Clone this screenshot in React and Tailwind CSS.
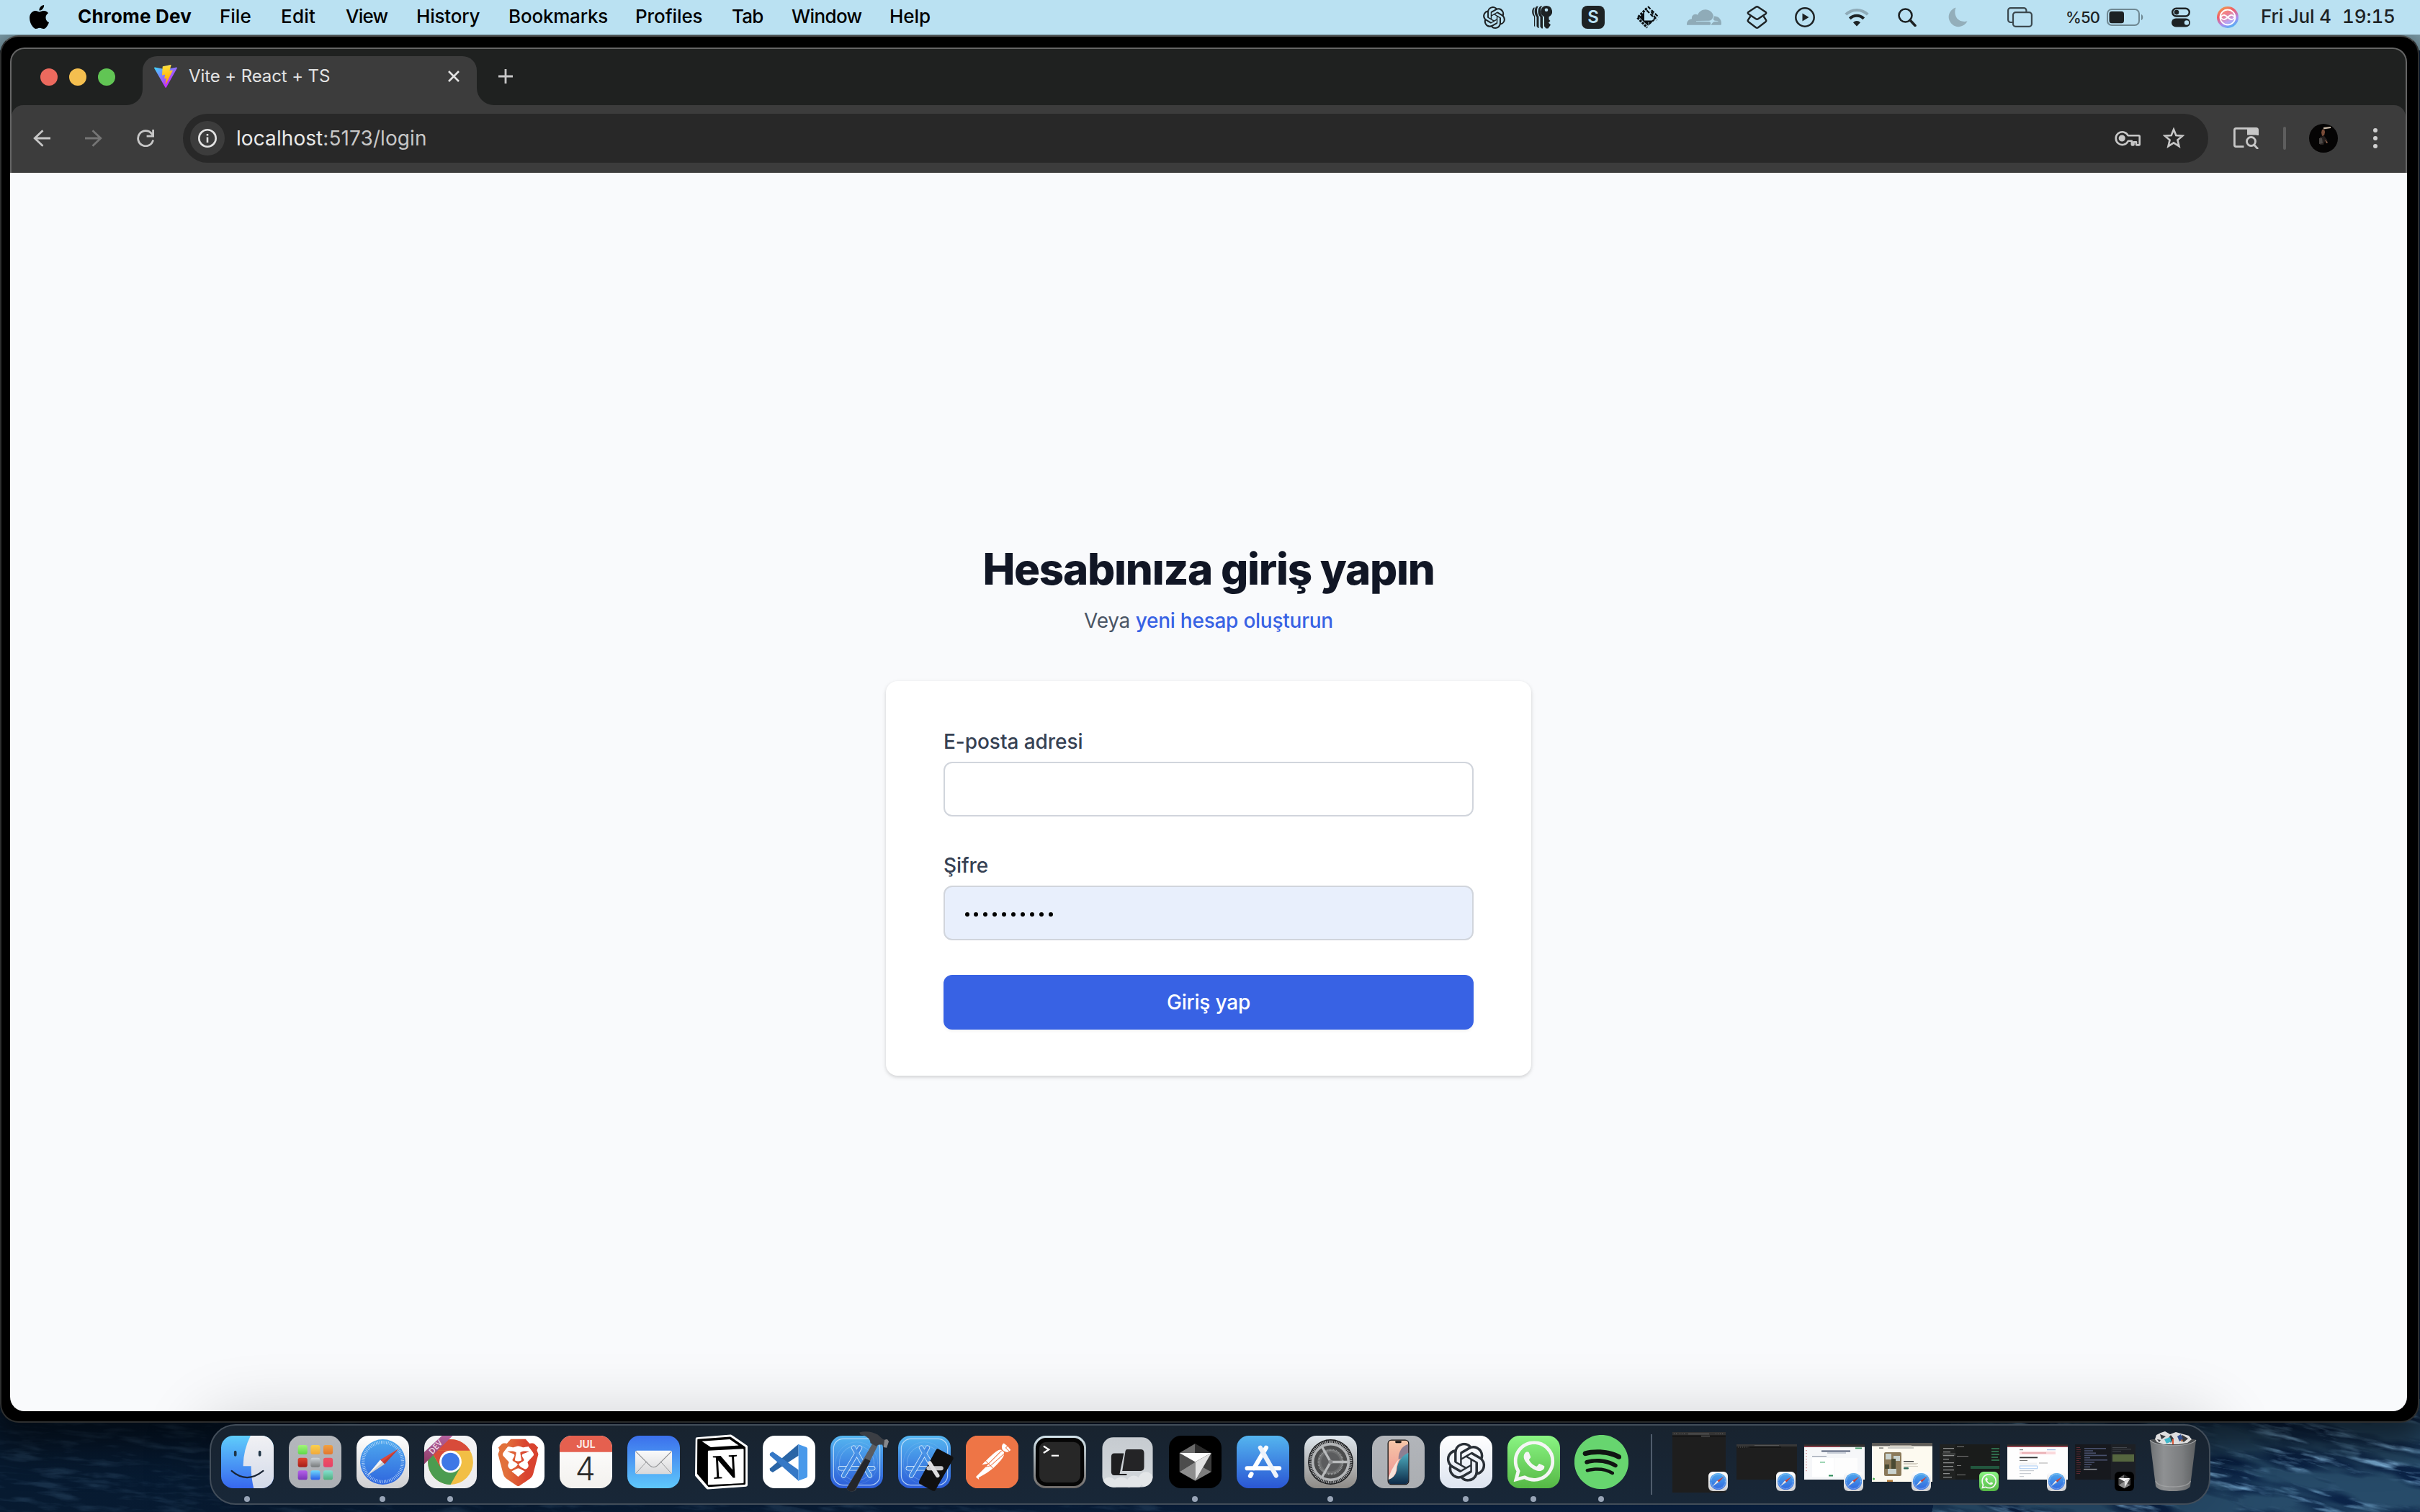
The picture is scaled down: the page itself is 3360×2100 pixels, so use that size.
import React from "react";
import { SiApple, SiBrave, SiCloudflare, SiOpenai, SiPostman, SiSpotify, SiWhatsapp } from "react-icons/si";

/* ---------- wallpaper ---------- */

function Wallpaper() {
  return (
    <svg className="absolute inset-0 h-full w-full" viewBox="0 0 3360 2100" preserveAspectRatio="none">
      <defs>
        <filter id="waves" x="0" y="0" width="100%" height="100%">
          <feTurbulence type="fractalNoise" baseFrequency="0.018 0.11" numOctaves="4" seed="7" />
          <feColorMatrix values="0 0 0 0 0.22  0 0 0 0 0.46  0 0 0 0 0.72  2.6 2.2 0 0 -2.35" />
        </filter>
        <filter id="troughs" x="0" y="0" width="100%" height="100%">
          <feTurbulence type="fractalNoise" baseFrequency="0.008 0.035" numOctaves="3" seed="3" />
          <feColorMatrix values="0 0 0 0 0.02  0 0 0 0 0.07  0 0 0 0 0.14  3 0 2 0 -1.9" />
        </filter>
        <linearGradient id="sea" x1="0" x2="1">
          <stop offset="0" stopColor="#071a30" />
          <stop offset="1" stopColor="#0b2448" />
        </linearGradient>
      </defs>
      <rect width="3360" height="2100" fill="url(#sea)" />
      <rect width="3360" height="70" fill="#8fb4c2" />
      <g transform="rotate(12 2900 2040)">
        <rect x="2700" y="1850" width="760" height="340" filter="url(#waves)" />
        <rect x="2700" y="1850" width="760" height="340" filter="url(#troughs)" />
      </g>
      <g transform="rotate(4 150 2040)" opacity="0.14">
        <rect x="-60" y="1940" width="1700" height="330" filter="url(#waves)" />
      </g>
    </svg>
  );
}

/* ---------- menu bar ---------- */

const menus = [
  ["Chrome Dev", "w-[197px] font-bold tracking-[0.2px]"],
  ["File", "w-[85px]"],
  ["Edit", "w-[90px] tracking-[0.2px]"],
  ["View", "w-[98px] tracking-[-0.8px]"],
  ["History", "w-[128px] tracking-[-0.2px]"],
  ["Bookmarks", "w-[176px] tracking-[-0.2px]"],
  ["Profiles", "w-[134px] tracking-[-0.1px]"],
  ["Tab", "w-[83px] tracking-[-0.8px]"],
  ["Window", "w-[136px] tracking-[-0.6px]"],
  ["Help", "tracking-[-0.1px]"],
];

function KeysIcon() {
  return (
    <svg className="ml-[37px] h-8 w-7" viewBox="0 0 28 32" fill="#1d2224">
      <path fillRule="evenodd" d="M20 0a8 8 0 0 1 3.500 15.200V19l2 2-2.500 2.500 3 3-3.500 5h-3l-2.500-3V15.300A8 8 0 0 1 20 0Zm0 3.500a2.300 2.300 0 1 0 0 4.600 2.300 2.300 0 0 0 0-4.600Z" />
      <path d="M12 .5C7.500 3 7.500 12.500 11.500 15.500V29l2 2.500h1.500V15c-3.500-3-4.500-11-.5-14.500zM6.500.8C2.500 3.500 3 12.500 6.500 15.500V28.500l2 2.500h1V15C6.500 11.500 6 4 9 .8zM2.500 2.500C-.8 5.500-.5 12 3 15v13l1.200 1.500V14.500C2 11 1.800 6 4 2.800z" />
    </svg>
  );
}

function DiamondIcon() {
  return (
    <svg className="ml-11 h-8 w-8" viewBox="0 0 32 32" fill="none" stroke="#0a0f12">
      <path d="M14.500 3.500L1.500 16.500L15 30.500" strokeWidth="3.200" strokeDasharray="3.200 1.400" />
      <path d="M11 8.500L4 16L11 23zM11 20.500H24L19 25L16.500 22.500V28L11 23z" fill="#0a0f12" stroke="none" />
      <path d="M16 1l15 15M14.500 6.500l12 12M20.500 8l8 12M17 26l8-7" strokeWidth="2.200" strokeDasharray="5 2" />
    </svg>
  );
}

function LayersIcon() {
  return (
    <svg className="ml-[35px] h-8 w-[29px]" viewBox="0 0 29 32" fill="none" stroke="#1d2224" strokeWidth="2.400" strokeLinejoin="round">
      <path d="M13 1.800q1.500-1 3 0l10.500 7q1.500 1.200 0 2.400l-10.500 7q-1.500 1-3 0l-10.500-7q-1.500-1.200 0-2.400z" />
      <path d="M5.500 14.500L2.500 19q-1.500 1.800 0 3.200l10.500 8q1.500 1 3 0l10.500-8q1.500-1.400 0-3.200l-3-4.500" />
    </svg>
  );
}

function WifiIcon() {
  return (
    <svg className="ml-[41px] h-[26px] w-[34px]" viewBox="0 0 34 26" fill="none" strokeWidth="4">
      <path d="M1.800 9.200a21.500 21.500 0 0 1 30.400 0" stroke="#8fabb8" />
      <path d="M7.300 14.800a13.800 13.800 0 0 1 19.400 0" stroke="#1d2224" />
      <path d="M17 25.500l-5-5.300a7 7 0 0 1 10 0z" fill="#1d2224" />
    </svg>
  );
}

function SiriIcon() {
  return (
    <svg className="ml-[37px] h-[30px] w-[30px]" viewBox="0 0 30 30">
      <defs>
        <linearGradient id="siri" x1="0.200" y1="0" x2="0.700" y2="1">
          <stop offset="0" stopColor="#f0a04b" />
          <stop offset="0.350" stopColor="#ef5b6b" />
          <stop offset="0.700" stopColor="#a98bf0" />
          <stop offset="1" stopColor="#45b5f5" />
        </linearGradient>
      </defs>
      <circle cx="15" cy="15" r="15" fill="url(#siri)" />
      <circle cx="15" cy="15" r="10.500" fill="#ffffff33" stroke="#fff" strokeWidth="1.800" />
      <path d="M5 15c4-5 7-3 10 0s6 5 10 0c-4-5-7-3-10 0s-6 5-10 0z" fill="none" stroke="#fff" strokeWidth="1.800" />
    </svg>
  );
}

function MenuBar() {
  return (
    <header className="relative z-10 flex h-12 shrink-0 items-center justify-between bg-[#bae1f2] text-[26px] leading-none font-[450] text-black">
      <div className="flex items-center pb-0.5">
        <SiApple className="mr-[37px] ml-[38px] size-[33px]" />
        {menus.map(([label, cls]) => (
          <span key={label} className={cls}>{label}</span>
        ))}
      </div>
      <div className="flex w-[1301px] items-center text-[#1d2224]">
        <SiOpenai className="size-[31px]" />
        <KeysIcon />
        <span className="ml-[41px] flex h-8 w-8 items-center justify-center rounded-[8px] bg-[#1d2224] text-[24px] font-semibold text-[#bae1f2]">S</span>
        <DiamondIcon />
        <SiCloudflare className="ml-[38px] size-12 text-[#8fabb8]" />
        <LayersIcon />
        <svg className="ml-[38px] size-7" viewBox="0 0 28 28">
          <circle cx="14" cy="14" r="12.700" fill="none" stroke="#1d2224" strokeWidth="2.500" />
          <path d="M10.500 8.500v11l9-5.500z" fill="#1d2224" />
        </svg>
        <WifiIcon />
        <svg className="ml-10 h-[26px] w-[26px]" viewBox="0 0 26 26" fill="none" stroke="#1d2224">
          <circle cx="10.500" cy="10.500" r="9" strokeWidth="2.600" />
          <path d="M17 17l7 7.500" strokeWidth="3.600" strokeLinecap="round" />
        </svg>
        <svg className="ml-11 h-7 w-[27px]" viewBox="0 0 27 28">
          <path d="M10.500.5C7 9 11 22.500 26.500 19.500A13.600 13.600 0 1 1 10.500.5z" fill="#93aeba" />
        </svg>
        <svg className="ml-[55px] h-7 w-[35px]" viewBox="0 0 35 28" fill="none" stroke="#3c494f" strokeWidth="2.200">
          <path d="M8 21H4.500a3.400 3.400 0 0 1-3.400-3.400V4.500A3.400 3.400 0 0 1 4.500 1.100h18.500a3.400 3.400 0 0 1 3.400 3.400V7" />
          <rect x="8" y="7.200" width="25.900" height="19.700" rx="3.600" />
        </svg>
        <span className="ml-[46px] w-[57px] text-[22px] tracking-[-0.9px]">%50</span>
        <svg className="h-6 w-[51px]" viewBox="0 0 51 24">
          <rect x="1" y="1" width="44" height="22" rx="6" fill="none" stroke="#6f8892" strokeWidth="2" />
          <rect x="3.500" y="3.800" width="20.500" height="16.400" rx="3.500" fill="#1d2224" />
          <path d="M48 8c3 .8 3 7.200 0 8z" fill="#6f8892" />
        </svg>
        <svg className="ml-[39px] h-7 w-[26px]" viewBox="0 0 26 28">
          <rect x="1.200" y="1.700" width="23.600" height="10.800" rx="5.400" fill="none" stroke="#1d2224" strokeWidth="2.400" />
          <circle cx="7" cy="7.100" r="3.300" fill="#1d2224" />
          <rect x="0" y="15.500" width="26" height="12" rx="6" fill="#1d2224" />
          <circle cx="21" cy="21.500" r="3.200" fill="#bae1f2" />
        </svg>
        <SiriIcon />
        <span className="ml-[31px] w-[113px] pb-0.5 tracking-[-0.2px] whitespace-nowrap">Fri Jul 4</span>
        <span className="pb-0.5 tracking-[-0.1px] tabular-nums">19:15</span>
      </div>
    </header>
  );
}

/* ---------- browser chrome ---------- */

function ViteLogo() {
  return (
    <svg className="size-8" viewBox="0 0 256 257">
      <defs>
        <linearGradient id="viteA" x1="-.828%" x2="57.636%" y1="7.652%" y2="78.411%">
          <stop offset="0%" stopColor="#41D1FF" />
          <stop offset="100%" stopColor="#BD34FE" />
        </linearGradient>
        <linearGradient id="viteB" x1="43.376%" x2="50.316%" y1="2.242%" y2="89.030%">
          <stop offset="0%" stopColor="#FFEA83" />
          <stop offset="8.333%" stopColor="#FFDD35" />
          <stop offset="100%" stopColor="#FFA800" />
        </linearGradient>
      </defs>
      <path fill="url(#viteA)" d="M255.153 37.938L134.897 252.976c-2.483 4.440-8.862 4.466-11.382.048L.875 37.958c-2.746-4.814 1.371-10.646 6.827-9.670l120.385 21.517a6.537 6.537 0 0 0 2.322-.004l117.867-21.483c5.438-.991 9.574 4.796 6.877 9.620Z" />
      <path fill="url(#viteB)" d="M185.432.063L96.440 17.501a3.268 3.268 0 0 0-2.634 3.014l-5.474 92.456a3.268 3.268 0 0 0 3.997 3.378l24.777-5.718c2.318-.535 4.413 1.507 3.936 3.838l-7.361 36.047c-.495 2.426 1.782 4.500 4.151 3.780l15.304-4.649c2.372-.720 4.652 1.360 4.150 3.788l-11.698 56.621c-.732 3.542 3.979 5.473 5.943 2.437l1.313-2.028l72.516-144.720c1.215-2.423-.880-5.186-3.540-4.672l-25.505 4.922c-2.396.462-4.435-1.770-3.759-4.114l16.646-57.705c.677-2.350-1.370-4.583-3.769-4.113Z" />
    </svg>
  );
}

function TabStrip() {
  return (
    <div className="flex h-[78px] items-end pl-10">
      <div className="flex h-[78px] items-center gap-4 pr-4">
        <span className="size-6 rounded-full bg-[#ec6a5e]" />
        <span className="size-6 rounded-full bg-[#f4bf4f]" />
        <span className="size-6 rounded-full bg-[#61c554]" />
      </div>
      <svg className="size-[22px]" viewBox="0 0 22 22"><path d="M22 0v22H0A22 22 0 0 0 22 0z" fill="#3c3c3c" /></svg>
      <div className="flex h-[68px] w-[464px] items-center rounded-t-[20px] bg-[#3c3c3c] pr-6 pb-3 pl-4">
        <ViteLogo />
        <span className="ml-4 text-[24px] leading-none tracking-[-0.1px] text-[#e3e3e3]">Vite + React + TS</span>
        <svg className="ml-auto size-4" viewBox="0 0 16 16"><path d="M1 1l14 14M15 1L1 15" stroke="#e3e3e3" strokeWidth="2.600" /></svg>
      </div>
      <svg className="size-6" viewBox="0 0 24 24"><path d="M0 0v24h24A24 24 0 0 1 0 0z" fill="#3c3c3c" /></svg>
      <svg className="mb-[30px] ml-1.5 size-5" viewBox="0 0 20 20"><path d="M10 0v20M0 10h20" stroke="#c7c7c7" strokeWidth="2.800" /></svg>
    </div>
  );
}

function Toolbar() {
  return (
    <div className="flex h-[94px] rounded-t-[16px] bg-[#3c3c3c] pt-3">
      <div className="flex h-[68px] flex-1 items-center">
        <svg className="ml-[30px] size-6" viewBox="0 0 24 24" fill="none" stroke="#c7c7c7" strokeWidth="2.800"><path d="M24 12H2M13.500 1.200L2.200 12l11.300 10.800" /></svg>
        <svg className="ml-12 size-6" viewBox="0 0 24 24" fill="none" stroke="#757575" strokeWidth="2.800"><path d="M0 12h22M10.500 1.200L21.800 12L10.500 22.800" /></svg>
        <svg className="ml-12 size-6" viewBox="0 0 24 24" fill="none" stroke="#c7c7c7" strokeWidth="2.800">
          <path d="M22.600 14.500A10.600 10.600 0 1 1 20.500 5.500l2 3" />
          <path d="M22.600 0v9.200h-9" />
        </svg>
        <div className="ml-10 flex h-[68px] w-[2812px] items-center rounded-full bg-[#282828] pr-[33px] pl-2.5">
          <span className="flex size-12 items-center justify-center rounded-full bg-[#3c3c3c]">
            <svg className="size-[26px]" viewBox="0 0 26 26" fill="none" stroke="#e3e3e3" strokeWidth="2.600">
              <circle cx="13" cy="13" r="11.700" />
              <path d="M13 11.500v7.500M13 7v2.600" />
            </svg>
          </span>
          <span className="ml-4 text-[28px] leading-none tracking-[0.08px] text-[#c7c7c7]"><span className="text-[#e8e8e8]">localhost</span>:5173/login</span>
          <svg className="ml-auto h-6 w-9" viewBox="0 0 36 24" fill="none" stroke="#c7c7c7" strokeWidth="2.600" strokeLinejoin="round">
            <path d="M18.600 8.500H33.500q1.200 0 1.200 1.200V21q0 .7-.7.700h-3.300q-.7 0-.7-.7v-3.500h-3.500V21q0 .7-.7.700h-1.300q-.7 0-.7-.7v-5h-5A8.900 8.900 0 1 1 18.600 8.500z" transform="translate(0 -.3)" />
            <circle cx="10.200" cy="12" r="3.300" fill="#c7c7c7" />
          </svg>
          <svg className="ml-[31px] size-[30px]" viewBox="0 0 30 30" fill="none" stroke="#c7c7c7" strokeWidth="2.600">
            <path d="M15 2.800l3.300 8.200 8.900.7-6.800 5.700 2.100 8.700L15 21.400l-7.500 4.700 2.100-8.700-6.800-5.700 8.900-.7z" />
          </svg>
        </div>
        <svg className="ml-[35px] h-[30px] w-[35px]" viewBox="0 0 35 30" fill="none" stroke="#c7c7c7" strokeWidth="2.800">
          <path d="M14.500 26.600H3.500q-2.100 0-2.100-2.100V3.500q0-2.100 2.100-2.100h28q2.100 0 2.100 2.100V11" />
          <path d="M19 1h14.500v9.500H19z" fill="#c7c7c7" stroke="none" />
          <circle cx="24.500" cy="19.500" r="6" />
          <path d="M28.500 24l5.500 6" />
        </svg>
        <span className="ml-[34px] h-8 w-1 rounded-full bg-[#5e5e5e]" />
        <svg className="ml-8 size-10" viewBox="0 0 40 40">
          <circle cx="20" cy="20" r="20" fill="#050404" />
          <path d="M20 5l10-1v2l-10 1.500z" fill="#c9b9a8" />
          <path d="M18 8q4-1 4 4l-1 4-3 1-1-5z" fill="#7a4c38" />
          <path d="M15 18l6-1 4 5 1 5-4-3-2 5h-5z" fill="#26201f" />
          <path d="M14 20h4l1 7-5 1z" fill="#4c4846" />
          <path d="M22 22l4 4-2 1z" fill="#9a6a50" />
        </svg>
        <svg className="ml-[49px] h-7 w-1.5" viewBox="0 0 6 28" fill="#d0d0d0">
          <circle cx="3" cy="3" r="3" /><circle cx="3" cy="14" r="3" /><circle cx="3" cy="25" r="3" />
        </svg>
      </div>
    </div>
  );
}

/* ---------- login page ---------- */

function LoginPage() {
  return (
    <main className="flex flex-1 flex-col items-center justify-center rounded-b-[20px] bg-[#f9fafc] pt-12">
      <h2 className="text-[60px] leading-[72px] font-extrabold tracking-[-1.25px] text-[#111625]">Hesabınıza giriş yapın</h2>
      <p className="mt-4 text-[28px] leading-10 tracking-[-0.25px] text-gray-600">
        Veya <a className="font-[480] text-[#3862e4]">yeni hesap oluşturun</a>
      </p>
      <form className="mt-16 flex w-[896px] flex-col rounded-2xl bg-white px-20 py-16 text-[28px] leading-10 font-[470] tracking-[-0.05px] text-gray-700 shadow-[0_2px_6px_rgba(0,0,0,0.1),0_2px_4px_rgba(0,0,0,0.08)]">
        <label>E-posta adresi</label>
        <div className="mt-2 h-[76px] rounded-xl border-2 border-gray-300 bg-white" />
        <label className="mt-12">Şifre</label>
        <div className="mt-2 flex h-[76px] items-center gap-[6.950px] rounded-xl border-2 border-gray-300 bg-[#e8effc] pt-1 pl-[27.500px]">
          {Array.from({ length: 10 }, (_, i) => (
            <span key={i} className="size-1.5 rounded-full bg-black" />
          ))}
        </div>
        <button type="button" className="mt-12 h-[76px] rounded-xl bg-[#3862e4] tracking-[-0.2px] text-white shadow-[0_2px_4px_rgba(0,0,0,0.05)]">Giriş yap</button>
      </form>
    </main>
  );
}

/* ---------- dock icons ---------- */

function Grad({ id, from, to }) {
  return (
    <linearGradient id={id} x1="0" y1="0" x2="0" y2="1">
      <stop offset="0" stopColor={from} />
      <stop offset="1" stopColor={to} />
    </linearGradient>
  );
}

function Icon({ id, from, to = from, children }) {
  return (
    <svg className="size-full overflow-visible" viewBox="0 0 100 100">
      <defs>
        <Grad id={id} from={from} to={to} />
        <clipPath id={`${id}-clip`}><rect width="100" height="100" rx="23" /></clipPath>
      </defs>
      <rect width="100" height="100" rx="23" fill={`url(#${id})`} />
      {children}
    </svg>
  );
}

function Finder() {
  return (
    <Icon id="finder" from="#5fcdfb" to="#3767ef">
      <defs><Grad id="finderR" from="#f1f1f4" to="#d3dae9" /></defs>
      <path clipPath="url(#finder-clip)" d="M56 0Q42 28 42 58H57Q57 80 62 100H100V0z" fill="url(#finderR)" />
      <path d="M27 31v6M73.500 31v6" stroke="#1f3446" strokeWidth="5" strokeLinecap="round" />
      <path d="M20 67Q49 92 80 67" fill="none" stroke="#182434" strokeWidth="3" strokeLinecap="round" />
    </Icon>
  );
}

const padColors = [
  ["#a3f57a", "#5fd84a"], ["#f9d04f", "#f2a93a"], ["#f0a244", "#e2762f"],
  ["#e2452f", "#a51f18"], ["#cfd6da", "#76797b"], ["#f0525f", "#e5406a"],
  ["#b561ea", "#7a34b8"], ["#6fd8fb", "#2a5ce8"], ["#84e0d0", "#4fae7c"],
];

function Launchpad() {
  return (
    <Icon id="pad" from="#b4b7bc" to="#acafb4">
      {padColors.map(([a, b], i) => (
        <g key={i}>
          <defs><Grad id={`pad${i}`} from={a} to={b} /></defs>
          <rect x={17.3 + (i % 3) * 24.2} y={17.8 + Math.floor(i / 3) * 24.2} width="18" height="17.800" rx="4" fill={`url(#pad${i})`} />
        </g>
      ))}
    </Icon>
  );
}

function Safari({ id = "safari" }) {
  return (
    <Icon id={id} from="#ffffff" to="#cfcfd1">
      <defs><Grad id={`${id}-dial`} from="#4ea9ee" to="#2f66de" /></defs>
      <circle cx="50" cy="50" r="43" fill={`url(#${id}-dial)`} />
      <circle cx="50" cy="50" r="37.500" fill="none" stroke="#cfe6fb" strokeWidth="6" strokeDasharray="0.900 2.370" />
      <path d="M80 25L45 46l8.500 8z" fill="#e0463a" />
      <path d="M20 76L45 46l8.500 8z" fill="#f3f3f3" />
      <path d="M80 25L53.500 54L20 76L49.500 50z" fill="#00000026" />
    </Icon>
  );
}

function ChromeDev() {
  return (
    <Icon id="chrome" from="#f4f4f6" to="#ececee">
      <defs><Grad id="ribbon" from="#b4629f" to="#8d3a63" /></defs>
      <circle cx="50" cy="50" r="43" fill="#f2bf45" />
      <path d="M12.760 28.500A43 43 0 0 1 87.240 28.500H50z" fill="#d84b3a" />
      <path d="M12.760 28.500A43 43 0 0 0 50 93L68.600 60.700L50 50L31.400 60.700z" fill="#4c9c50" />
      <path d="M12.760 28.500L31.400 60.700L50 50V28.500z" fill="#d84b3a" />
      <circle cx="50" cy="49.500" r="21" fill="#fff" />
      <circle cx="50" cy="49.500" r="17" fill="#3e78e6" />
      <path clipPath="url(#chrome-clip)" d="M-2 33L36-2H56L-2 56z" fill="url(#ribbon)" />
      <text x="21.500" y="27" transform="rotate(-48 21.500 21.500)" textAnchor="middle" fontSize="15.500" fontWeight="600" fill="#f3dcea" fontFamily="Open Sans, sans-serif">DEV</text>
    </Icon>
  );
}

function Brave() {
  return (
    <Icon id="brave" from="#ffffff">
      <defs>
        <linearGradient id="lion"><stop offset="0.200" stopColor="#e2703a" /><stop offset="0.700" stopColor="#d9432f" /></linearGradient>
      </defs>
      <SiBrave x="5" y="6" size={90} fill="url(#lion)" />
    </Icon>
  );
}

function Calendar() {
  return (
    <Icon id="cal" from="#ffffff" to="#f3f1ee">
      <path clipPath="url(#cal-clip)" d="M0 0h100v31H0z" fill="#e5604f" />
      <text x="50" y="23.500" textAnchor="middle" fontSize="19" fontWeight="700" fill="#fbe9e6" fontFamily="Inter, sans-serif">JUL</text>
      <text x="49" y="85" textAnchor="middle" fontSize="61" fontWeight="300" fill="#2c2c2c" fontFamily="Inter, sans-serif">4</text>
    </Icon>
  );
}

function Mail() {
  return (
    <Icon id="mail" from="#3b70ec" to="#5fc8fb">
      <defs><Grad id="env" from="#fafafa" to="#d8d8da" /></defs>
      <rect x="15" y="28.500" width="70" height="44.500" rx="3" fill="url(#env)" />
      <path d="M16 72L37 49M84 72L63 49" stroke="#8f9092" strokeWidth="1.200" />
      <path d="M16 30l27 27q7 6 14 0l27-27" fill="none" stroke="#8b8c8e" strokeWidth="1.500" />
    </Icon>
  );
}

function Notion() {
  return (
    <svg className="size-full overflow-visible" viewBox="0 0 100 100" strokeLinejoin="round">
      <path d="M4 6L68 1L97 21V94L24 99L3 75z" fill="#fff" stroke="#fff" strokeWidth="6" />
      <path d="M6 8L67 3.500L94.500 22.500V91.500L26 96L5.500 72z" fill="#000" stroke="#000" strokeWidth="3" />
      <path d="M13 10.500L66 7l17 11.500L30 22z" fill="#fff" />
      <path d="M26 30L91 26.500V89L26 92z" fill="#fff" stroke="#fff" strokeWidth="3" />
      <text x="57.500" y="81" textAnchor="middle" transform="rotate(-3 57 60)" fontSize="66" fontWeight="700" fill="#000" fontFamily="Liberation Serif, serif">N</text>
    </svg>
  );
}

function VsCode() {
  return (
    <Icon id="vsc" from="#ffffff">
      <path d="M14 62Q12.500 65 14.500 67L19 70L68 38V16Z" fill="#2a65a6" />
      <path d="M14 38Q12.500 35 14.500 33L19 30.500L68 65V86Z" fill="#3578c6" />
      <path d="M67 16L83 22Q85 23 85 25V77Q85 79 83 80L67 86Q68 84 68 82V20Q68 18 67 16z" fill="#4999ea" />
    </Icon>
  );
}

function Blueprint() {
  return (
    <g fill="none" stroke="#cfe6fb" strokeLinecap="round">
      <rect x="6" y="6" width="88" height="88" rx="18" strokeWidth="1.600" opacity="0.800" />
      <circle cx="50" cy="52" r="33" strokeWidth="1" opacity="0.400" />
      <circle cx="50" cy="52" r="40" strokeWidth="0.800" opacity="0.250" />
      <path d="M19 62H81" strokeWidth="9" /><path d="M19 62H81" strokeWidth="6.500" stroke="#4188e2" />
      <path d="M56 23L25 76M44 23L75 76" strokeWidth="9" />
      <path d="M56 23L25 76" strokeWidth="6.500" stroke="#4188e2" />
      <path d="M44 23L75 76" strokeWidth="6.500" stroke="#4a93e6" />
    </g>
  );
}

function Xcode() {
  return (
    <Icon id="xcode" from="#55b6f0" to="#2b5bd8">
      <Blueprint />
      <path d="M81 13L90 19L48 103Q44 108 35 105Q30 102 32 98z" fill="#5a5d62" />
      <path d="M66 43L76 48L47 103Q43 108 35 105Q30 102 32 98z" fill="#24262b" />
      <path d="M55-6Q72-11 90-2L99 6L103 8L108 7L111 11L107 23L101 22L99 17L92 17L87 20L76 14Q76 2 57-2z" fill="#3b3e44" />
      <path d="M103 8L108 7L111 11L107 23L101 22z" fill="#85878c" />
    </Icon>
  );
}

function Simulator() {
  return (
    <Icon id="sim" from="#55b6f0" to="#2b5bd8">
      <Blueprint />
      <path d="M76 25L104 40Q106 43 104 46L70 105L66 105L40 91Q39 88 41 84L72 27Q74 24 76 25z" fill="#101010" />
      <path d="M58 62H82" stroke="#c9c9cb" strokeWidth="8" strokeLinecap="round" />
      <path d="M60 52L75 76" stroke="#dededf" strokeWidth="7.500" strokeLinecap="round" />
    </Icon>
  );
}

function Postman() {
  return (
    <Icon id="postman" from="#ee7546">
      <circle cx="50" cy="50" r="42" fill="#fff" />
      <g clipPath="url(#postman-clip)"><SiPostman x="-13.500" y="-11" size={124} color="#ee7546" /></g>
    </Icon>
  );
}

function Terminal() {
  return (
    <Icon id="term" from="#d3e4ec" to="#6e6a68">
      <rect x="4" y="4" width="92" height="92" rx="20" fill="#050505" />
      <rect x="11" y="12" width="78" height="77" rx="13" fill="#272727" />
      <path d="M19 20l10 6.500-10 6.500" fill="none" stroke="#fff" strokeWidth="3.200" />
      <path d="M34 38h14" stroke="#fff" strokeWidth="3" />
    </Icon>
  );
}

function Panels() {
  return (
    <svg className="size-full" viewBox="0 0 100 100">
      <defs>
        <Grad id="panels" from="#c6cbd0" to="#d3d8dc" />
        <clipPath id="panels-clip"><rect x="2" y="3" width="96" height="95" rx="21" /></clipPath>
      </defs>
      <rect x="2" y="3" width="96" height="95" rx="21" fill="url(#panels)" />
      <g clipPath="url(#panels-clip)" fill="#e3e6e8">
        <circle cx="15" cy="93" r="14" /><circle cx="38" cy="96" r="17" /><circle cx="62" cy="90" r="14" /><circle cx="85" cy="83" r="14" />
      </g>
      <path d="M25 33.500H43L35 72.500H49L48 75.500H25Q19 75.500 19 69V40Q19 33.500 25 33.500z" fill="#1e1e20" />
      <path d="M49 26H75Q81.500 26 81.500 33V60Q81.500 67 75 67H40L46 29Q47 26 49 26z" fill="#242426" />
    </svg>
  );
}

function Cursor({ id = "cursor" }) {
  return (
    <Icon id={id} from="#000000">
      <path d="M50 15L20 33L50 33z" fill="#6a6a6a" /><path d="M50 15L80.500 33H50z" fill="#2b2b2b" />
      <path d="M20 33V69L50 50z" fill="#4c4c4c" /><path d="M20 69L50 50V86z" fill="#8d8d8d" />
      <path d="M80.500 33V69L50 86z" fill="#7d7d7d" /><path d="M80.500 33V69L64 60z" fill="#3c3c3c" />
      <path d="M20 33H80.500L50 50z" fill="#fcfcfc" /><path d="M80.500 33L50 86V50z" fill="#e2e2e2" />
    </Icon>
  );
}

function AppStore() {
  return (
    <Icon id="store" from="#54b5ef" to="#2a56d4">
      <g stroke="#fff" strokeWidth="8.500" strokeLinecap="round">
        <path d="M56 23L33 62M20 62H81" /><path d="M45 23L75 76" stroke="#eef3fa" /><path d="M28 73L26 76.500" />
      </g>
    </Icon>
  );
}

function Settings() {
  return (
    <Icon id="settings" from="#dfe7ee" to="#8d8a86">
      <circle cx="50" cy="50" r="43" fill="#1d1e20" />
      <circle cx="50" cy="50" r="38.500" fill="none" stroke="#a4a6a8" strokeWidth="5" strokeDasharray="1.800 1.550" />
      <circle cx="50" cy="50" r="34" fill="#4a4b4c" stroke="#b3b5b7" strokeWidth="5" />
      <circle cx="50" cy="50" r="23" fill="#6c6d6e" stroke="#97999a" strokeWidth="3.500" strokeDasharray="1.600 1.200" />
      <circle cx="50" cy="50" r="18" fill="#5b5c5e" />
      <path d="M50 50H82M50 50L34 22M50 50L34 78" stroke="#b9bbbd" strokeWidth="4.500" />
      <circle cx="50" cy="50" r="4" fill="#8a8b8d" />
    </Icon>
  );
}

function Phone() {
  return (
    <Icon id="phone" from="#b2b5ba" to="#abaeb2">
      <defs>
        <Grad id="wallA" from="#f6c7a8" to="#ee8f90" /><Grad id="wallB" from="#4fb0c2" to="#0c2846" />
        <clipPath id="screen"><rect x="31" y="9" width="38" height="83" rx="6" /></clipPath>
      </defs>
      <rect x="29.500" y="7.500" width="41" height="86" rx="7.500" fill="#111" />
      <g clipPath="url(#screen)">
        <rect x="31" y="9" width="38" height="83" fill="url(#wallA)" />
        <path d="M69 16Q50 22 50 46L69 36z" fill="#8d7f92" />
        <path d="M70 32Q48 42 47 66Q44 80 31 83V93H70z" fill="url(#wallB)" />
        <path d="M52 43Q46 55 46 66Q43 80 31 84V80Q38 60 52 43z" fill="#f5e3da" />
      </g>
      <rect x="44" y="10" width="12" height="4" rx="2" fill="#111" />
    </Icon>
  );
}

function ChatGpt() {
  return <Icon id="gpt" from="#ffffff" to="#dde4f0"><SiOpenai x="13" y="13.500" size={74} color="#2a3037" /></Icon>;
}

function WhatsApp({ id = "wa" }) {
  return <Icon id={id} from="#8af583" to="#55b845"><SiWhatsapp x="11.500" y="10" size={78} color="#f5f5f5" /></Icon>;
}

function Spotify() {
  return (
    <svg className="size-full overflow-visible" viewBox="0 0 100 100">
      <circle cx="50" cy="50" r="48" fill="#101512" />
      <SiSpotify x="-1.500" y="-1.500" size={103} color="#67d56f" />
    </svg>
  );
}

const apps = [
  [Finder, true], [Launchpad], [Safari, true], [ChromeDev, true], [Brave], [Calendar], [Mail], [Notion], [VsCode],
  [Xcode], [Simulator], [Postman], [Terminal], [Panels], [Cursor, true], [AppStore], [Settings, true], [Phone],
  [ChatGpt, true], [WhatsApp, true], [Spotify, true],
];

/* ---------- minimised windows ---------- */

function Rows({ x, y, step, widths, fill, h = 1.2 }) {
  return widths.map((w, i) => <rect key={i} x={x} y={y + i * step} width={w} height={h} fill={fill} />);
}

function DarkTall() {
  return (
    <svg className="mt-[9px] h-[84px] w-[74px]" viewBox="0 0 74 84">
      <rect width="74" height="84" fill="#1e1e1e" /><rect width="74" height="4.500" fill="#333" /><rect y="4.500" width="74" height="2.500" fill="#171717" />
      <rect x="22" y="1.300" width="29" height="2.300" fill="#4a4a4a" /><rect x="40" y="4.500" width="12" height="2.500" fill="#3a3a3a" />
      <path d="M2 2.500h6M10 2.500h9M60 2.500h12" stroke="#666" strokeDasharray="1 2" />
    </svg>
  );
}

function DarkWide() {
  return (
    <svg className="mt-[26px] h-[49px] w-[84px]" viewBox="0 0 84 49">
      <rect width="84" height="49" fill="#1e1e1e" /><rect width="84" height="3" fill="#383838" /><rect x="18" y="3" width="44" height="1.500" fill="#0f0f0f" />
      <rect x="25" y="1" width="34" height="1.200" fill="#555" /><path d="M2 4h14" stroke="#666" strokeWidth="0.800" strokeDasharray="1 2" />
    </svg>
  );
}

function EditorPage() {
  return (
    <svg className="mt-[26px] h-[49px] w-[84px]" viewBox="0 0 84 49">
      <rect width="84" height="49" fill="#f6f7f9" /><rect width="84" height="2.500" fill="#2e2a2a" /><rect y="2.500" width="50" height="1.500" fill="#7d2230" />
      <rect x="50" y="2.500" width="34" height="1.500" fill="#333" /><rect x="71" y="4.500" width="9" height="1.800" fill="#3b9b66" />
      <rect x="24" y="8.500" width="40" height="1.800" fill="#44506b" /><rect x="32" y="11.500" width="26" height="1" fill="#9aa3b5" />
      <rect x="11" y="16" width="20" height="1" fill="#8b93a3" /><rect x="11" y="19" width="30" height="26" fill="#fff" /><rect x="42" y="19" width="32" height="26" fill="#fdfdfd" />
      <rect x="22" y="24" width="7" height="1.800" fill="#8fd0aa" /><rect x="34" y="42.500" width="6" height="2" fill="#2d8a57" />
      <Rows x={2} y={8} step={4} widths={[2, 2, 2, 2, 2, 2, 2, 2]} fill="#d8a3a6" />
    </svg>
  );
}

function ShopPage() {
  return (
    <svg className="mt-6 h-[54px] w-[84px]" viewBox="0 0 84 54">
      <rect width="84" height="54" fill="#fdfaf0" /><rect width="84" height="4.500" fill="#5d5b57" /><rect x="25" y="3" width="30" height="1.500" fill="#a59f94" />
      <rect x="10" y="6.500" width="6" height="1.200" fill="#555" /><rect x="22" y="6.500" width="36" height="1" fill="#999" />
      <rect x="17" y="13" width="24" height="33" rx="2" fill="#8b7a5a" /><path d="M19 15h8v8h-8zM30 18h9v7h-9zM22 36h12v7H22z" fill="#c9d3cf" /><path d="M27 22h6v14h-6zM18 30h6v6h-6z" fill="#4a4a33" />
      <rect x="44" y="25" width="14" height="1.500" fill="#444" /><Rows x={44} y={28} step={2} widths={[20, 18, 20]} fill="#c9c3b5" h={0.8} /><rect x="44" y="34" width="7" height="2.600" rx="1" fill="#2b6a59" />
      <circle cx="2.500" cy="50" r="1.600" fill="#4caf50" /><rect x="21" y="51.500" width="8" height="2.500" fill="#b07b3a" />
    </svg>
  );
}

function ChatPage() {
  return (
    <svg className="mt-[26px] h-[49px] w-[84px]" viewBox="0 0 84 49">
      <rect width="84" height="49" fill="#1a1c1b" /><rect width="22" height="49" fill="#202221" /><rect x="4" y="12" width="18" height="4" fill="#3a3c3b" />
      <Rows x={5} y={5} step={5} widths={[15, 10, 15, 8, 15, 14, 15, 9, 12]} fill="#8b8d8c" h={1.3} />
      <Rows x={72} y={5} step={4} widths={[11, 10, 11, 9, 11]} fill="#2f6b4b" h={2} /><rect x="43" y="30" width="40" height="4" fill="#22573e" />
      <Rows x={24} y={3} step={13} widths={[10, 16, 6, 12]} fill="#777" h={1} />
    </svg>
  );
}

function FormPage() {
  return (
    <svg className="mt-[26px] h-[49px] w-[84px]" viewBox="0 0 84 49">
      <rect width="84" height="49" fill="#fefefe" /><rect width="84" height="2.500" fill="#2e2a2a" /><rect y="2.500" width="84" height="1.500" fill="#8a2a38" />
      <rect x="17" y="7" width="5" height="1.200" fill="#777" /><rect x="55" y="7" width="12" height="1.200" fill="#9fb8e0" />
      <rect x="17" y="10" width="50" height="4" fill="#fbd9dc" /><rect x="20" y="11.500" width="34" height="1" fill="#d88a90" />
      <rect x="17" y="17.500" width="25" height="1.800" fill="#333" /><rect x="17" y="22" width="11" height="1" fill="#777" />
      <rect x="17.500" y="30" width="24" height="3.800" fill="#fff" stroke="#8fbcf0" strokeWidth="0.800" /><rect x="17" y="25.500" width="24" height="3" fill="#f1f2f4" />
      <rect x="44" y="25.500" width="12" height="1" fill="#aaa" /><Rows x={17} y={36} step={4} widths={[20, 16, 6]} fill="#c8ccd2" />
    </svg>
  );
}

function CodePage() {
  return (
    <svg className="mt-[26px] h-[49px] w-[84px]" viewBox="0 0 84 49">
      <rect width="84" height="49" fill="#17191e" /><rect x="50" width="34" height="49" fill="#1d2025" />
      <Rows x={2} y={4} step={3} widths={[5, 6, 6, 5, 6, 6, 4, 6, 6, 5, 6, 6, 5]} fill="#5c2a33" h={1} />
      <Rows x={13} y={5} step={3.2} widths={[30, 12, 16, 31, 8, 32, 14, 10, 8, 18]} fill="#48506c" h={1.6} />
      <rect x="52" y="14" width="30" height="10" fill="#55663f" /><Rows x={52} y={4} step={2.5} widths={[20, 26, 12]} fill="#4c4f57" h={0.8} /><rect x="12" y="34" width="18" height="1.300" fill="#999" />
    </svg>
  );
}

const minimised = [
  [DarkTall, Safari], [DarkWide, Safari], [EditorPage, Safari], [ShopPage, Safari], [ChatPage, WhatsApp], [FormPage, Safari], [CodePage, Cursor],
];

function Trash() {
  return (
    <svg className="mt-[7px] h-[84px] w-[66px]" viewBox="0 0 66 84">
      <defs>
        <linearGradient id="bin"><stop offset="0" stopColor="#6f7274" /><stop offset="0.300" stopColor="#8f9193" /><stop offset="0.700" stopColor="#7b7d7f" /><stop offset="1" stopColor="#5c5f61" /></linearGradient>
      </defs>
      <path d="M1 13Q33 6 65 13L57 77Q54 84 33 84Q12 84 9 77z" fill="url(#bin)" />
      <path d="M1 13Q33 6 65 13Q60 20 33 20Q6 20 1 13z" fill="#4b4e50" />
      <path d="M8 12L10 6L16 3L22 1L29 5L37 2L44 4L55 7L59 12L53 17L40 19H20L11 16z" fill="#dedede" />
      <path d="M15 5l8 3-6 4zM46 6l8 5-6 5-5-4zM30 6l4 5-4 6-4-6zM11 12l5 1-2 3z" fill="#3a3c40" />
      <path d="M21 12l8-3 2 6-7 3z" fill="#3fb6c9" /><path d="M32 12l2-1v8h-2z" fill="#d8593a" /><path d="M39 8l5-3 3 7-5 3z" fill="#33508e" /><path d="M44 12l3 1-2 3z" fill="#c2662f" />
      <path d="M1 13Q6 20 33 21Q60 20 65 13" fill="none" stroke="#a2a4a6" strokeWidth="1.200" />
      <path d="M9 70Q12 78 33 78Q54 78 57.500 70" fill="none" stroke="#a6a8aa" strokeWidth="1.500" opacity="0.700" />
    </svg>
  );
}

function Dock() {
  return (
    <nav className="relative mx-auto mt-0.5 flex h-28 w-[2778px] shrink-0 rounded-[36px] border-2 border-[#424d59] bg-linear-to-b from-[#18232f] to-[#182738] pl-[3px] shadow-[0_0_90px_10px_rgba(0,0,0,0.18)]">
      {apps.map(([App, running], i) => (
        <div key={i} className="flex w-[94px] flex-col items-center pt-3.5">
          <div className="size-[73px]"><App /></div>
          {running && <span className="mt-[11px] size-2 rounded-full bg-[#98a4b6]" />}
        </div>
      ))}
      <div className="flex w-[42px] justify-center pt-3 pl-1"><span className="h-[84px] w-0.5 bg-[#4f5c6c]" /></div>
      {minimised.map(([Thumb, Badge], i) => (
        <div key={i} className="relative flex w-[94px] flex-col items-center">
          <Thumb />
          <div className="absolute top-16 left-[60px] size-[27px]"><Badge id={`badge${i}`} /></div>
        </div>
      ))}
      <div className="flex w-[94px] flex-col items-center"><Trash /></div>
    </nav>
  );
}

/* ---------- desktop ---------- */

export default function App() {
  return (
    <div className="relative flex h-[2100px] w-[3360px] flex-col overflow-hidden bg-[#071a30] font-['Inter',sans-serif]">
      <Wallpaper />
      <MenuBar />
      <div className="relative mt-px flex h-[1927px] w-[3359px] shrink-0 flex-col rounded-[26px] border-2 border-[#2e2f2f] border-t-[#4a4b4b] bg-black pt-[15px] pr-[15px] pb-3.5 pl-3 shadow-[0_16px_50px_20px_rgba(0,0,0,0.55)]">
        <div className="flex h-[174px] flex-col rounded-t-[20px] border-2 border-b-0 border-[#656565] bg-[#1f2120]">
          <TabStrip />
          <Toolbar />
        </div>
        <LoginPage />
      </div>
      <Dock />
    </div>
  );
}
